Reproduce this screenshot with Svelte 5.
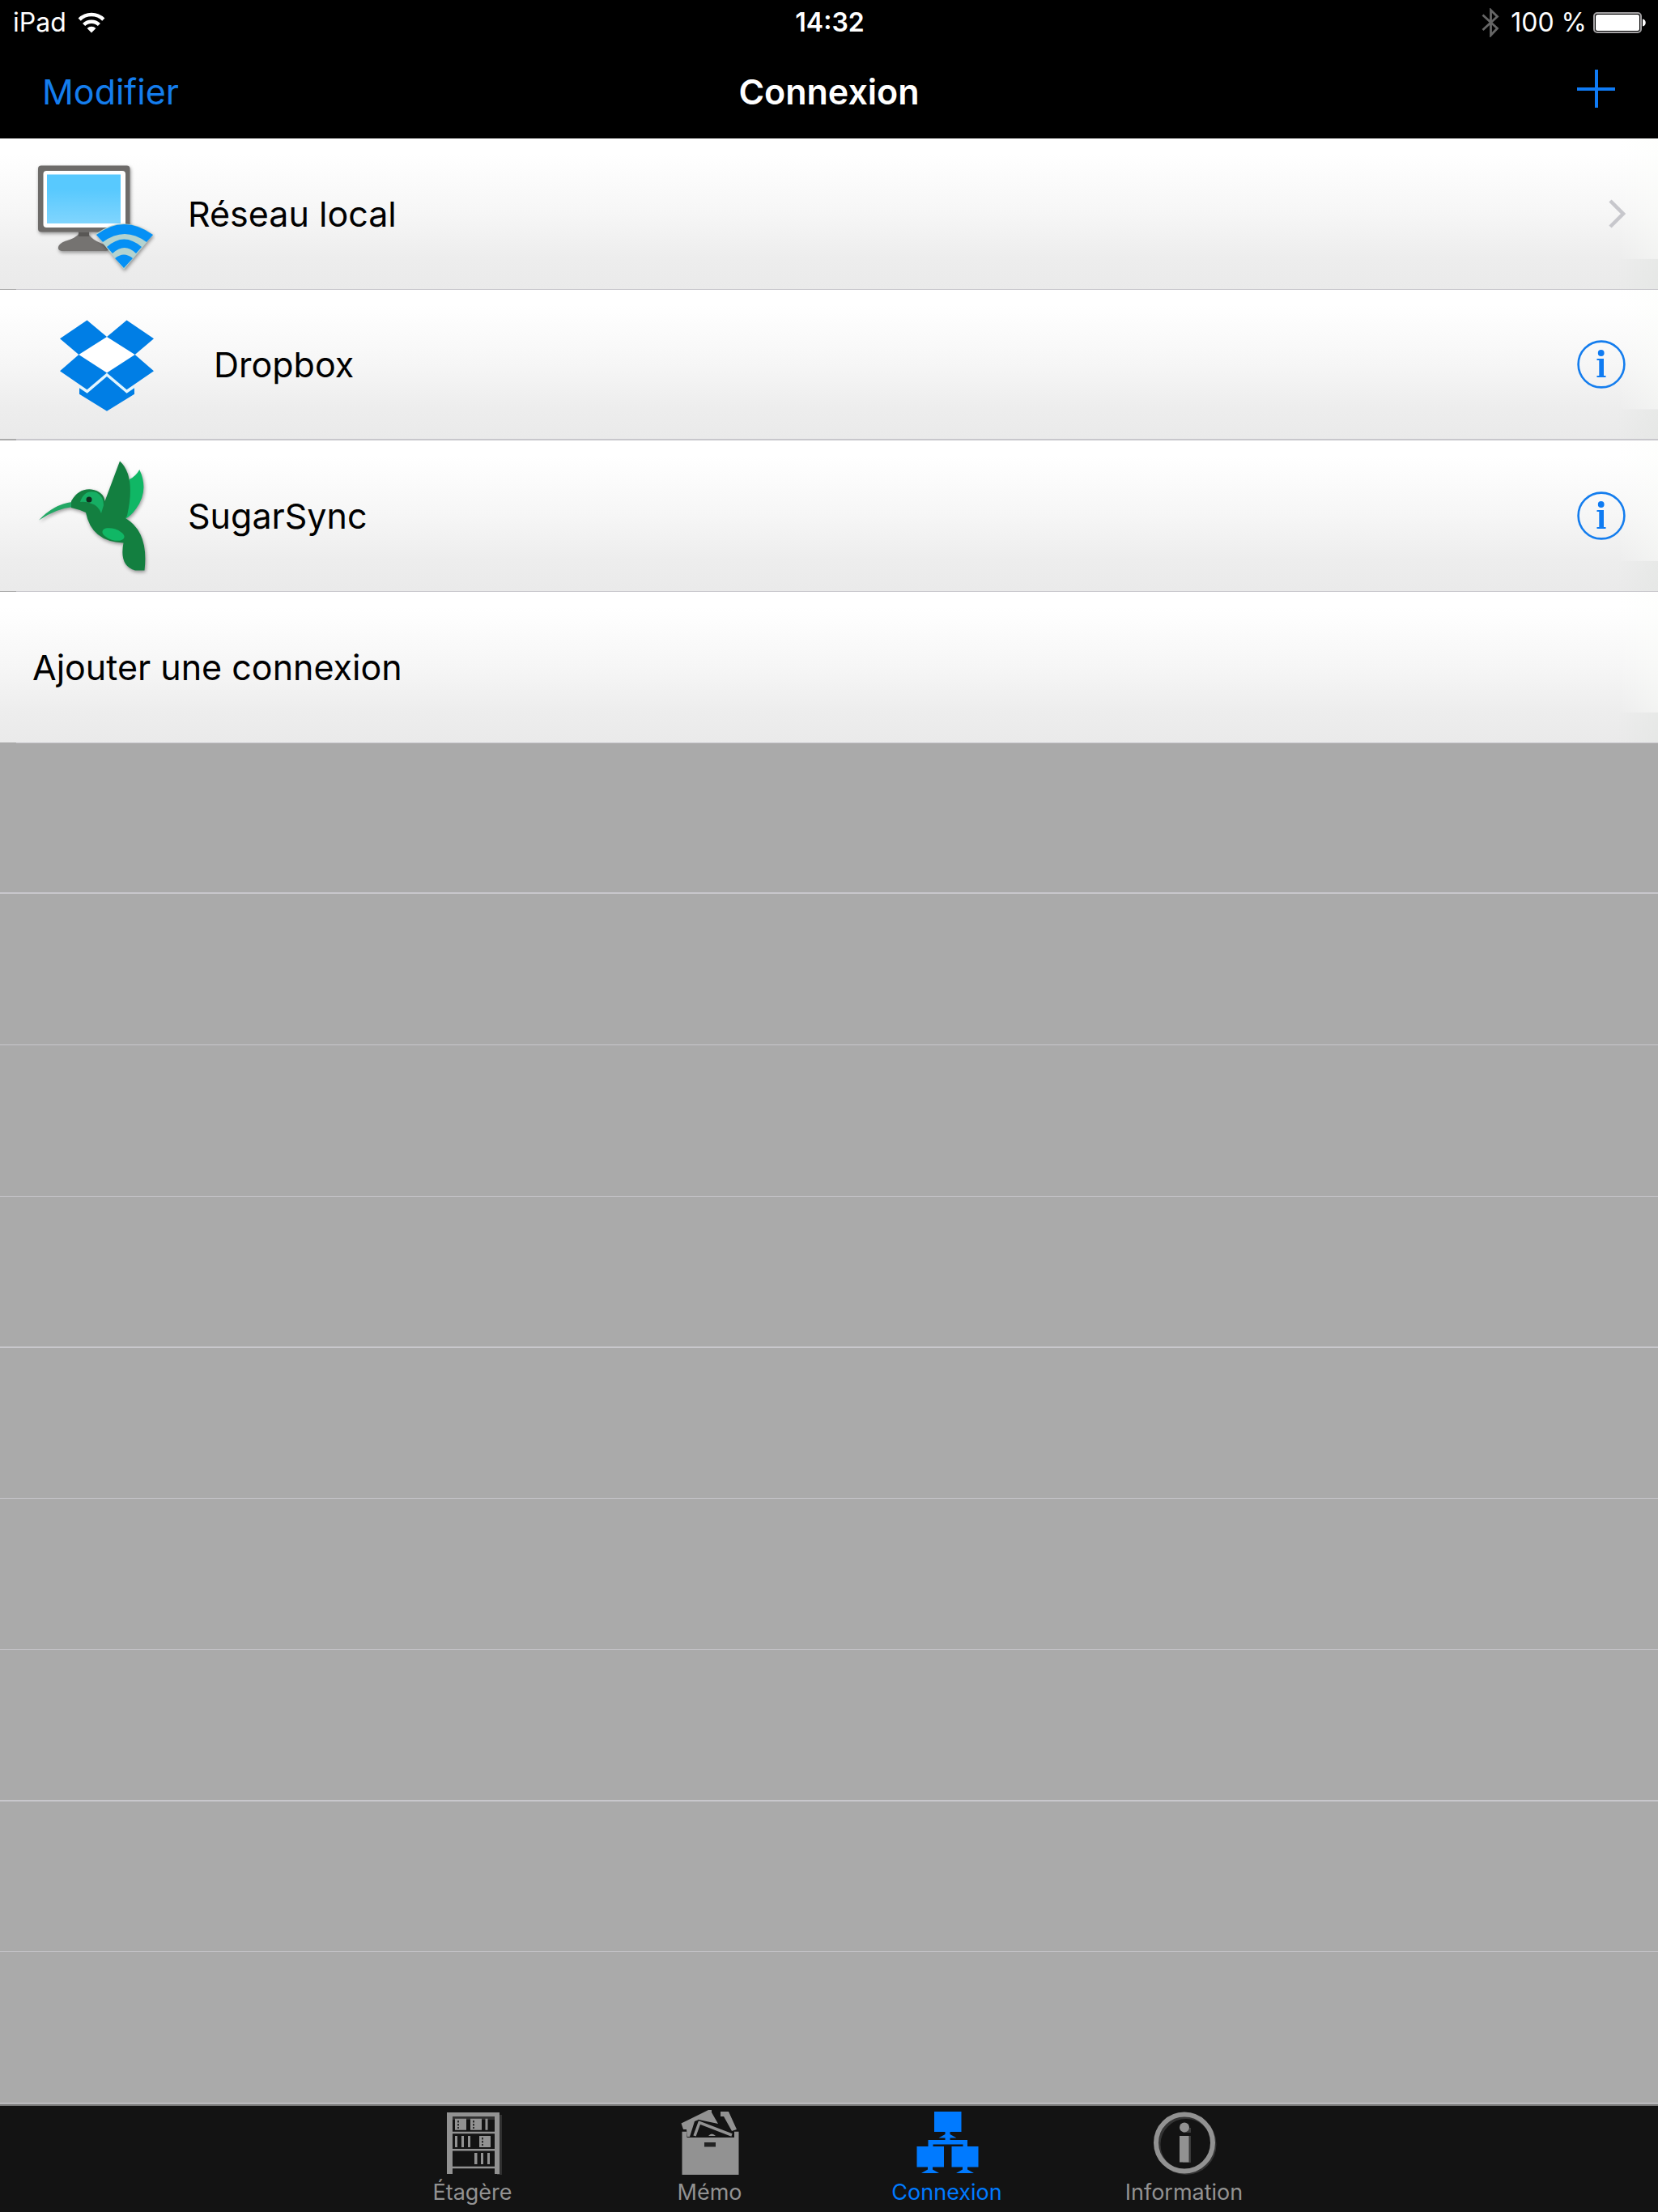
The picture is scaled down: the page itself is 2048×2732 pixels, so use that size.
<script lang="ts">
	type Connection = {
		name: string;
		icon?: 'network' | 'dropbox' | 'sugarsync';
		accessory?: 'chevron' | 'info';
	};

	const connections: Connection[] = [
		{ name: 'Réseau local', icon: 'network', accessory: 'chevron' },
		{ name: 'Dropbox', icon: 'dropbox', accessory: 'info' },
		{ name: 'SugarSync', icon: 'sugarsync', accessory: 'info' },
		{ name: 'Ajouter une connexion' }
	];

	const emptyRows = 9;

	const tabs = [
		{ id: 'shelf', label: 'Étagère' },
		{ id: 'memo', label: 'Mémo' },
		{ id: 'connection', label: 'Connexion' },
		{ id: 'info', label: 'Information' }
	];

	let activeTab = $state('connection');
</script>

<div class="page">
	<header>
		<div class="status">
			<div class="status-left">
				<span>iPad</span>
				<svg width="34" height="26" viewBox="0 0 34 26" aria-hidden="true">
					<g fill="none" stroke="#fff" stroke-width="4.500">
						<path d="M2.200 9.200a21 21 0 0 1 29.600 0" />
						<path d="M7.600 15.500a13.400 13.400 0 0 1 18.800 0" />
					</g>
					<path d="M11.600 20a7.600 7.600 0 0 1 10.800 0L17 25.500z" fill="#fff" />
				</svg>
			</div>
			<span class="time">14:32</span>
			<div class="status-right">
				<svg width="22" height="36" viewBox="0 0 22 36" aria-hidden="true">
					<path d="M1.500 8.500 19.500 25 11.500 33.500V2.500L19.500 10.500 1.500 27" fill="none" stroke="#666" stroke-width="2.800" />
				</svg>
				<span class="percent">100 %</span>
				<svg width="66" height="26" viewBox="0 0 66 26" aria-hidden="true">
					<rect x="1" y="1" width="58" height="24" rx="4" fill="none" stroke="#a5a3a5" stroke-width="2" />
					<rect x="3" y="3" width="54" height="20" rx="2.500" fill="#fff" />
					<path d="M61 8.500c5 .5 5 8.500 0 9z" fill="#fff" />
				</svg>
			</div>
		</div>
		<div class="navbar">
			<button class="edit">Modifier</button>
			<h1>Connexion</h1>
			<button class="add" aria-label="Ajouter">
				<svg width="48" height="48" viewBox="0 0 48 48">
					<path d="M24 0v47M0 24h47" stroke="#0f7bf5" stroke-width="4" />
				</svg>
			</button>
		</div>
	</header>

	<ul class="list">
		{#each connections as { name, icon, accessory }}
			<li class="row">
				<a href="#{icon ?? 'new'}">
					{#if icon === 'network'}
						<svg width="152" height="152" viewBox="0 0 152 152" aria-hidden="true">
							<defs>
								<linearGradient id="screen" x2="0" y2="1">
									<stop offset=".3" stop-color="#58c9fe" />
									<stop offset="1" stop-color="#80d5fe" />
								</linearGradient>
							</defs>
							<g class="shadow">
								<path d="M57 96h13v6q4 6 14 10 10 4 10 9l-3 1H36q-5-1-4-5 1-4 8-7 14-4 17-9z" fill="#757371" />
								<path d="M57 99h13v5H57z" fill="#595755" />
								<rect x="7" y="16.500" width="113.500" height="82" rx="4" fill="#6d6b69" />
								<rect x="13.500" y="23" width="101.500" height="70" rx="4" fill="#fff" />
								<rect x="18" y="27.500" width="91" height="60.500" fill="url(#screen)" />
							</g>
							<g class="shadow">
								<path d="M78 101q35-26 71 1l-36 43z" fill="#b3d3d0" />
								<path d="M79 102q34-26 70 0l-8 9q-27-20-54 0z" fill="#0590f5" />
								<path d="M92 117q21-19 43 0l-7 8q-14-14-29 0z" fill="#0590f5" />
								<path d="M102 131q11-9 22 0l-11 12z" fill="#0590f5" />
							</g>
						</svg>
					{:else if icon === 'dropbox'}
						<svg width="184" height="184" viewBox="-1 -1 184 184" aria-hidden="true">
							<path d="M91 57 126 79 91 101 56 79z" fill="#fff" />
							<path d="M57 120 66.500 124.500 91 103.500 115.500 124.500 125 120" fill="none" stroke="#e2f6ff" stroke-width="4" />
							<g fill="#007ee5">
								<path d="M66.500 36.500 91 57 56.300 79 33 59.300z" />
								<path d="M115.500 36.500 91 57 125.700 79 149 59.300z" />
								<path d="M56.300 79 91 101.500 66.500 122.300 33 99.300z" />
								<path d="M125.700 79 91 101.500 115.500 122.300 149 99.300z" />
								<path d="M57 120.300 66.700 126.700 91 106 115.500 126.700 125 120.300V127.700L91 148.700 57 127.700z" />
							</g>
						</svg>
					{:else if icon === 'sugarsync'}
						<svg class="shadow" width="152" height="152" viewBox="0 -2 152 152" aria-hidden="true">
							<path d="M120 29q8-4 12.300-12 12 26-4 48-7 10-14 13z" fill="#10b765" />
							<path d="M8 79.500Q26 60 49 57l1 6Q30 65 8 79.500z" fill="#22a865" />
							<path
								d="M48 56Q57 40 73 41.500 88 44 89.500 56L108 6.500Q128 25 117 74L115 77Q144 94 138.500 141.500H127Q107 136 112.500 107.500 73 106 66 70 57 66 48 64z"
								fill="#137f40"
							/>
							<path d="M59 57Q64 41 79 45 88 50 88 61L85 71Q81 61 73 59 66 56 59 57z" fill="#16ae63" />
							<ellipse cx="100" cy="97" rx="14" ry="7" transform="rotate(17 100 97)" fill="#10b765" />
							<circle cx="70" cy="54" r="3.500" fill="#102a1c" />
						</svg>
					{/if}
					<span class="name">{name}</span>
					{#if accessory === 'chevron'}
						<svg width="21" height="36" viewBox="0 0 21 36" aria-hidden="true">
							<path d="M2 2 18 18 2 34" fill="none" stroke="#c7c7cc" stroke-width="4.500" />
						</svg>
					{/if}
				</a>
				{#if accessory === 'info'}
					<button class="detail" aria-label="Détails {name}">
						<svg width="60" height="60" viewBox="0 0 60 60">
							<circle cx="30" cy="30" r="28.400" fill="none" stroke="#147dee" stroke-width="2.600" />
							<circle cx="29.700" cy="16" r="3.900" fill="#0f7bf2" />
							<path d="M24.500 23h8.500v21h2.500v2H24.500v-2h2.800V25h-2.800z" fill="#0f7bf2" />
						</svg>
					</button>
				{/if}
			</li>
		{/each}
		{#each { length: emptyRows } as _}
			<li class="empty" aria-hidden="true"></li>
		{/each}
	</ul>

	<nav class="tabbar">
		{#each tabs as { id, label }}
			<button class="tab" class:active={activeTab === id} onclick={() => (activeTab = id)}>
				<svg width="80" height="80" viewBox="0 0 80 80" fill="currentColor" aria-hidden="true">
					{#if id === 'shelf'}
						<path d="M11 6h65v74H70V12H11z" fill="#303030" />
						<path d="M8 3h65v76h-6V8H15v71H8z" />
						<path d="M15 26.700h52v2.500H15zM15 48h52v2.500H15zM15 69.700h52v2.500H15z" />
						<path d="M18 10.700h14v14H18zM37 10.700h14v14H37zM55.500 10.700h3v14h-3z" />
						<path d="M18 32h3v14h-3zM26 32h3v14h-3zM34 32h3v14h-3zM48 32h14v14H48z" />
						<path d="M42 53h3.500v14H42zM50 53h3v14h-3zM58 53h3v14h-3z" />
						<path
							d="M22 13v10M41 13v10M52 34v10"
							stroke="#2c2c2c"
							stroke-width="2"
							stroke-dasharray="2.500 1.500"
						/>
					{:else if id === 'memo'}
						<path d="M4.500 16.500 30 4 38 0h4v3l8 14-24-5-5 2-6 19h-3l-1-9H7z" />
						<path d="M53 2h10l10 22-6 2L57 8h-4z" />
						<path d="M23 33 28 17 66 32" fill="none" stroke="#131313" stroke-width="8" />
						<path d="M21 32 27 15.500 67 31" fill="none" stroke="currentColor" stroke-width="3.500" />
						<path d="M38 32q4-5 9 0z" />
						<path d="M5.500 26.700h6V34h58.500v-7.300h5.500V80h-70z" />
						<rect x="33" y="40" width="14" height="5.500" fill="#222" />
					{:else if id === 'connection'}
						<path d="M24 2h33.500v25H43.500v3l8 4.500h-8V37H65v8h13.500v25.500H65v3l8 4.500H51l8-4.500v-3H45.500V45h14v-2.500h-37V45H36v25.500H22v3l8 4.500H8l8-4.500v-3H2.500V45h14v-8h21v-2.500h-8l8-4.500v-3H24z" />
					{:else}
						<circle cx="42" cy="42.500" r="34.500" fill="none" stroke="#343434" stroke-width="6" />
						<circle cx="40" cy="40.500" r="35" fill="none" stroke="currentColor" stroke-width="6" />
						<path d="M38 22h10v43H38z" fill="#3a3a3a" />
						<path d="M33 28h15v4H33z" fill="#131313" />
						<circle cx="40" cy="21.500" r="6" />
						<rect x="34" y="32" width="11.500" height="32.500" />
					{/if}
				</svg>
				<span>{label}</span>
			</button>
		{/each}
	</nav>
</div>

<style>
	:global(body) {
		margin: 0;
		background: #aaa;
		font-family: Inter, 'Liberation Sans', sans-serif;
	}

	.page {
		min-height: 100vh;
		display: flex;
		flex-direction: column;
		color: #000;
	}

	button {
		margin: 0;
		padding: 0;
		border: 0;
		background: none;
		font: inherit;
		cursor: pointer;
	}

	svg {
		display: block;
		flex: none;
	}

	header {
		background: #000;
		color: #fff;
	}

	.status,
	.navbar {
		display: grid;
		grid-template-columns: 1fr auto 1fr;
		align-items: center;
	}

	.status {
		height: 55px;
		padding: 0 14px 0 16px;
		font-size: 32px;
	}

	.status-left,
	.status-right {
		display: flex;
		align-items: center;
		gap: 14px;
	}

	.status-right {
		justify-content: flex-end;
	}

	.percent {
		margin-right: -6px;
	}

	.time {
		font-weight: 600;
	}

	.navbar {
		height: 116px;
		padding: 0 52px;
		font-size: 43px;
	}

	.navbar h1 {
		margin: 0;
		font-size: 43px;
		font-weight: 600;
	}

	.edit {
		justify-self: start;
		color: #147dee;
	}

	.add {
		justify-self: end;
		padding-bottom: 6px;
	}

	.list {
		flex: 1;
		display: grid;
		grid-auto-rows: 1fr;
		margin: 0;
		padding: 0 0 1px;
		list-style: none;
	}

	.row,
	.empty {
		border-bottom: 1px solid #c8c7cc;
	}

	.row:nth-child(3n + 2),
	.empty:nth-child(3n + 2) {
		border-bottom-width: 2px;
	}

	.row {
		display: flex;
		align-items: center;
		padding: 0 40px;
		border-image: linear-gradient(to right, #aaa 21px, #c8c7cc 21px) 1;
		background:
			linear-gradient(to right, rgba(251, 253, 249, 0), rgba(251, 253, 249, 0.4)) top right / 50px 80% no-repeat,
			linear-gradient(to right, rgba(226, 229, 226, 0), rgba(226, 229, 226, 0.5)) bottom right / 50px 20% no-repeat,
			linear-gradient(#fff 10%, #f6f6f6 50%, #ededed 80%, #eaeaea);
	}

	.row a {
		flex: 1;
		display: flex;
		align-items: center;
		gap: 40px;
		color: inherit;
		text-decoration: none;
	}

	.name {
		flex: 1;
		font-size: 43px;
	}

	.shadow {
		filter: drop-shadow(1px 2px 2px rgba(0, 0, 0, 0.4));
	}

	.tabbar {
		display: flex;
		justify-content: center;
		height: 131px;
		padding-right: 2px;
		border-top: 2px solid #777;
		background: #131313;
	}

	.tab {
		width: 293px;
		display: flex;
		flex-direction: column;
		align-items: center;
		gap: 6px;
		padding-top: 5px;
		color: #929292;
		font-size: 27px;
		line-height: 31px;
	}

	.tab.active {
		color: #007aff;
	}
</style>
